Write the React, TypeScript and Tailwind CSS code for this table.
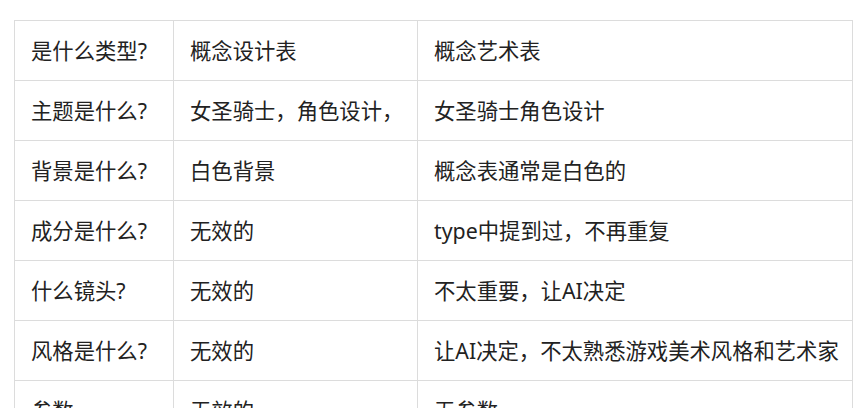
import React from 'react';

const rows: [string, string, string][] = [
  ['是什么类型?', '概念设计表', '概念艺术表'],
  ['主题是什么?', '女圣骑士，角色设计，', '女圣骑士角色设计'],
  ['背景是什么?', '白色背景', '概念表通常是白色的'],
  ['成分是什么?', '无效的', 'type中提到过，不再重复'],
  ['什么镜头?', '无效的', '不太重要，让AI决定'],
  ['风格是什么?', '无效的', '让AI决定，不太熟悉游戏美术风格和艺术家'],
  ['参数', '无效的', '无参数'],
];

function App() {
  return (
    <div className="h-[408px] overflow-hidden bg-white pl-[14px] pt-[20px] font-['Noto_Sans','Noto_Sans_CJK_SC',sans-serif] text-[21.33px] text-[#222]">
      <table className="w-[838px] table-fixed border-collapse">
        <colgroup>
          <col className="w-[159px]" />
          <col className="w-[244px]" />
          <col className="w-[435px]" />
        </colgroup>
        <tbody>
          {rows.map((r, i) => (
            <tr key={i} className="h-[60px]">
              {r.map((c, j) => (
                <td key={j} className="whitespace-nowrap border border-[#dcdcdc] px-4 py-0 align-middle leading-[28px]">
                  {c}
                </td>
              ))}
            </tr>
          ))}
        </tbody>
      </table>
    </div>
  );
}

export default App;
